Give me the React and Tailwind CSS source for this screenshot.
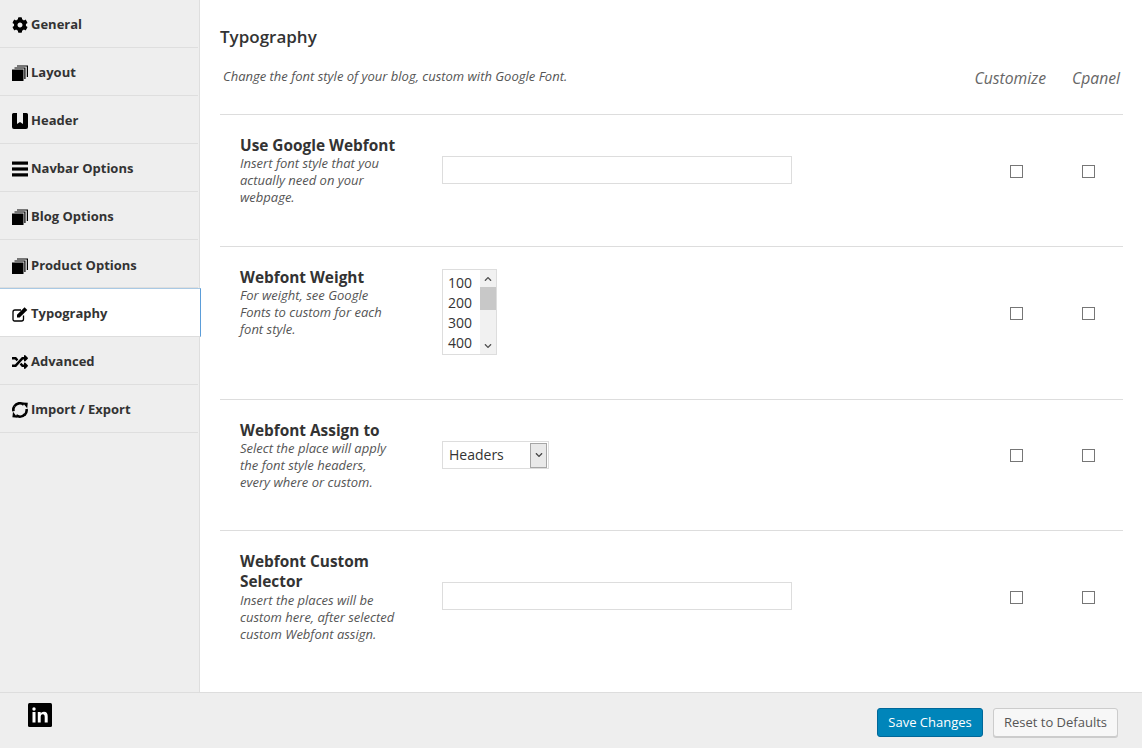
import React from 'react';
import { FaCog, FaRandom, FaChevronUp, FaChevronDown } from 'react-icons/fa';

const Stack = () => (
  <svg viewBox="0 0 16 16" className="w-4 h-4" fill="currentColor">
    <path d="M0 4.5h11.5V16H0z" />
    <path d="M2.5 2.5h11V14h-1.2V3.6H2.5z" />
    <path d="M5 .5h11V12h-1.2V1.6H5z" />
  </svg>
);

const Bookmark = () => (
  <svg viewBox="0 0 16 16" className="w-4 h-4" fill="currentColor">
    <path d="M1.5 0H5v11l3-2 3 2V0h3.5A1.5 1.5 0 0 1 16 1.5V14a2 2 0 0 1-2 2H2a2 2 0 0 1-2-2V1.5A1.5 1.5 0 0 1 1.5 0z" />
  </svg>
);

const Bars = () => (
  <svg viewBox="0 0 16 16" className="w-4 h-4" fill="currentColor">
    <rect x="0" y="0.5" width="16" height="3.2" />
    <rect x="0" y="6.4" width="16" height="3.2" />
    <rect x="0" y="12.3" width="16" height="3.2" />
  </svg>
);

const EditBox = () => (
  <svg viewBox="0 0 16 16" className="w-4 h-4" fill="none" stroke="currentColor">
    <path d="M11.5 9.5v3.5a2 2 0 0 1-2 2H2.5a1.5 1.5 0 0 1-1.5-1.5V6a2 2 0 0 1 2-2h6" strokeWidth="1.3" />
    <path d="M5 11.5V8.8L12.6 1.2l2.7 2.7-7.600 7.600z" fill="currentColor" stroke="none" />
  </svg>
);

const Ring = () => (
  <svg viewBox="0 0 16 16" className="w-4 h-4" fill="currentColor">
    <path d="M2.4 4.2A6.5 6.5 0 0 1 11.8 2.6" fill="none" stroke="currentColor" strokeWidth="2.6" />
    <path d="M14.5 7A6.5 6.5 0 0 1 12.6 13" fill="none" stroke="currentColor" strokeWidth="2.6" />
    <path d="M12.8 12.4A6.5 6.5 0 0 1 4.2 13.4" fill="none" stroke="currentColor" strokeWidth="2.6" />
    <path d="M1.5 9.2A6.5 6.5 0 0 1 2.4 4.2" fill="none" stroke="currentColor" strokeWidth="2.6" />
    <path d="M10.4.4 15.8.8l-.6 5.4zM5.600 15.800.4 15.200l.6-5.400z" />
  </svg>
);

const LinkedIn = () => (
  <svg viewBox="0 0 24 24" className="w-6 h-6">
    <rect width="24" height="24" rx="1.5" fill="#000000" />
    <circle cx="6" cy="6" r="1.7" fill="#ffffff" />
    <rect x="4.5" y="9" width="3" height="10.5" fill="#ffffff" />
    <path d="M9.8 9h2.9v1.5c.6-1 1.7-1.8 3.2-1.8 2.9 0 3.8 1.9 3.8 4.6v6.2h-3v-5.5c0-1.5-.4-2.7-1.9-2.7-1.6 0-2.1 1.2-2.1 2.7v5.5H9.800z" fill="#ffffff" />
  </svg>
);

const menu = [
  { label: 'General', icon: <FaCog size={18} />, h: 'h-[48px] pt-[2px]' },
  { label: 'Layout', icon: <Stack />, h: 'h-[48px] pt-[2px]' },
  { label: 'Header', icon: <Bookmark />, h: 'h-[48px] pt-[2px]' },
  { label: 'Navbar Options', icon: <Bars />, h: 'h-[48px] pt-[2px]' },
  { label: 'Blog Options', icon: <Stack />, h: 'h-[48px] pt-[2px]' },
  { label: 'Product Options', icon: <Stack />, h: 'h-[48px] pt-[4px]' },
  { label: 'Typography', icon: <EditBox />, h: 'h-[49px] pt-[2px]', active: true },
  { label: 'Advanced', icon: <FaRandom size={16} />, h: 'h-[48px] pt-[2px]' },
  { label: 'Import / Export', icon: <Ring />, h: 'h-[48px] pt-[2px]' },
];

const Check = () => <span className="block w-[13px] h-[13px] border border-[#767676] bg-white" />;

const TextInput = () => <div className="w-[350px] h-[28px] border border-[#dddddd] bg-white" />;

const WeightList = () => (
  <div className="flex w-[55px] h-[86px] border border-[#dddddd] bg-white">
    <div className="flex-1 pl-[5px] pt-[3px] text-[14px] leading-[20px] text-[#333333]">
      <div>100</div>
      <div>200</div>
      <div>300</div>
      <div>400</div>
    </div>
    <div className="w-[16px] bg-[#f1f1f1] flex flex-col items-center text-[#505050]">
      <div className="h-[17px] flex items-center justify-center">
        <FaChevronUp size={8} />
      </div>
      <div className="w-full h-[23px] bg-[#c8c8c8]" />
      <div className="flex-1" />
      <div className="h-[17px] flex items-center justify-center">
        <FaChevronDown size={8} />
      </div>
    </div>
  </div>
);

const AssignSelect = () => (
  <div className="flex items-center w-[107px] h-[28px] border border-[#dddddd] bg-white pl-[6px] pr-px text-[14px] text-[#333333]">
    <span className="flex-1 pb-[2px]">Headers</span>
    <span className="w-[17px] h-[25px] bg-[#e9e9e9] border border-[#a6a6a6] flex items-center justify-center text-[#444444]">
      <FaChevronDown size={8} />
    </span>
  </div>
);

const rows = [
  {
    title: ['Use Google Webfont'],
    desc: ['Insert font style that you', 'actually need on your', 'webpage.'],
    control: <TextInput />,
    rowH: 'h-[132px]',
    ctrlPt: 'pt-[41px]',
    checkPt: 'pt-[50px]',
    descMt: '-mt-px',
  },
  {
    title: ['Webfont Weight'],
    desc: ['For weight, see Google', 'Fonts to custom for each', 'font style.'],
    control: <WeightList />,
    rowH: 'h-[153px]',
    ctrlPt: 'pt-[22px]',
    checkPt: 'pt-[60px]',
    descMt: '-mt-px',
  },
  {
    title: ['Webfont Assign to'],
    desc: ['Select the place will apply', 'the font style headers,', 'every where or custom.'],
    control: <AssignSelect />,
    rowH: 'h-[131px]',
    ctrlPt: 'pt-[41px]',
    checkPt: 'pt-[49px]',
    descMt: '-mt-px',
  },
  {
    title: ['Webfont Custom', 'Selector'],
    desc: ['Insert the places will be', 'custom here, after selected', 'custom Webfont assign.'],
    control: <TextInput />,
    rowH: 'h-[139px]',
    ctrlPt: 'pt-[51px]',
    checkPt: 'pt-[60px]',
    descMt: 'mt-0',
  },
];

export default function App() {
  return (
    <div className="w-[1142px] h-[748px] flex flex-col overflow-hidden bg-white font-['Open_Sans',sans-serif] text-[#333333]">
      <div className="flex h-[692px]">
        <aside className="w-[200px] shrink-0 bg-[#eeeeee] border-r border-[#dedede]">
          {menu.map((m) => (
            <div
              key={m.label}
              className={`${m.h} flex items-center gap-[3px] pl-3 border-b text-[13px] font-bold ${
                m.active
                  ? 'relative w-[201px] bg-white border-b-[#dddddd] border-t border-t-[#a9c9e4] border-r border-r-[#5b9dd9] z-10'
                  : 'w-[198px] border-b-[#dedede]'
              } text-[#333333]`}
            >
              <span className="w-4 h-4 flex items-center justify-center text-black">{m.icon}</span>
              <span>{m.label}</span>
            </div>
          ))}
        </aside>

        <main className="flex-1 pl-5 pr-[19px]">
          <h2 className="pt-[25px] text-[17px] leading-[23px] font-semibold text-[#333333]">Typography</h2>
          <div className="flex h-[67px] border-b border-[#dddddd]">
            <p className="flex-1 pl-[3px] pt-[19px] text-[13px] leading-[18px] italic text-[#555555]">
              Change the font style of your blog, custom with Google Font.
            </p>
            <div className="flex gap-[26px] pr-[3px] pt-[19px] text-[15.7px] leading-[22px] italic text-[#666666]">
              <span>Customize</span>
              <span>Cpanel</span>
            </div>
          </div>

          {rows.map((r, i) => (
            <div key={i} className={`flex ${r.rowH} ${i < rows.length - 1 ? 'border-b border-[#dddddd]' : ''}`}>
              <div className="w-[222px] pl-5 pt-[21px] shrink-0">
                {r.title.map((t) => (
                  <div key={t} className="text-[15.4px] leading-[20px] font-bold text-[#333333]">{t}</div>
                ))}
                <div className={r.descMt}>
                  {r.desc.map((d) => (
                    <div key={d} className="text-[13px] leading-[17px] italic text-[#555555]">{d}</div>
                  ))}
                </div>
              </div>
              <div className={`flex-1 ${r.ctrlPt}`}>{r.control}</div>
              <div className={`flex gap-[59px] pr-[28px] ${r.checkPt}`}>
                <Check />
                <Check />
              </div>
            </div>
          ))}
        </main>
      </div>

      <footer className="flex-1 flex items-start justify-between bg-[#eeeeee] border-t border-[#dddddd] pl-[28px] pr-[24px]">
        <div className="pt-[10px]">
          <LinkedIn />
        </div>
        <div className="flex gap-[10px] pt-[15px]">
          <button className="h-[29px] w-[106px] rounded-[3px] bg-[#0085ba] border border-[#006799] text-[13px] text-white">
            Save Changes
          </button>
          <button className="h-[29px] w-[125px] rounded-[3px] bg-[#f7f7f7] border border-[#cccccc] text-[13px] text-[#555555] shadow-[0_1px_0_#cccccc]">
            Reset to Defaults
          </button>
        </div>
      </footer>
    </div>
  );
}
